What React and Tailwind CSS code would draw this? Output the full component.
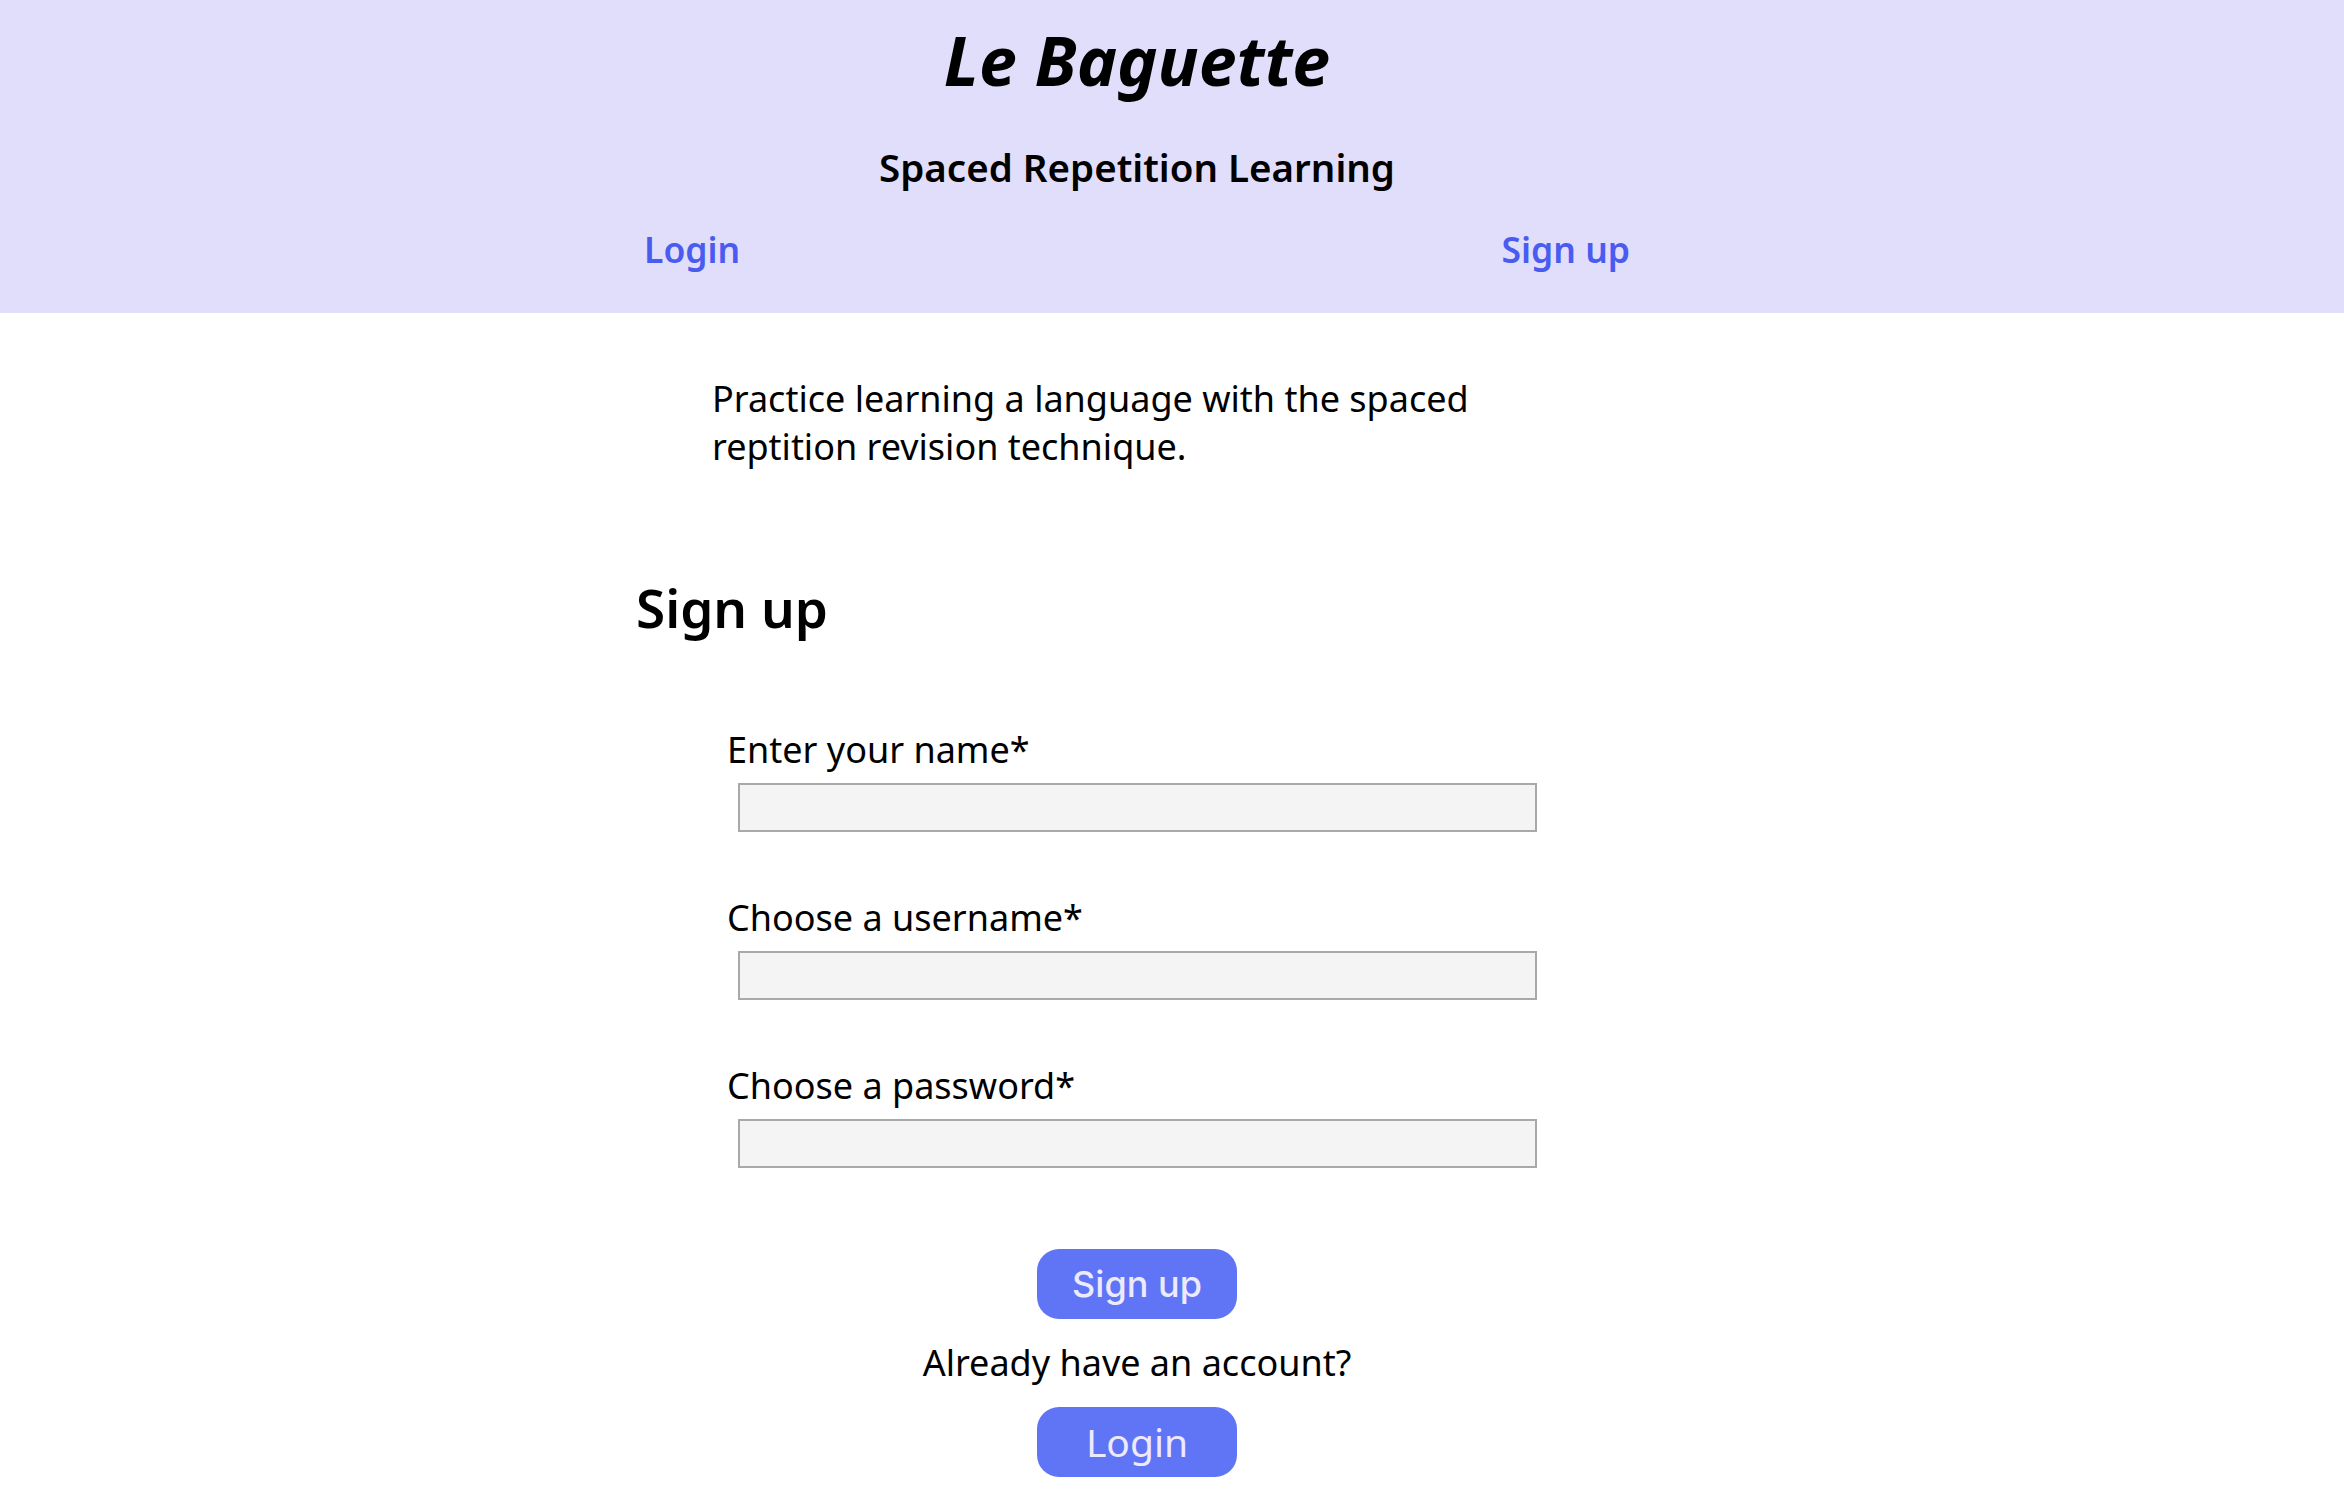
import React, { useState } from "react";

const Field = ({ label, type = "text", value, onChange }) => (
  <div className="flex flex-col">
    <label className="text-[36px] leading-[46px] text-black">{label}</label>
    <input
      type={type}
      value={value}
      onChange={onChange}
      className="mt-[10px] ml-[11px] h-[49px] w-[799px] border-2 border-[#a9a9a9] bg-[#f4f4f4] outline-none"
    />
  </div>
);

const App = () => {
  const [form, setForm] = useState({ name: "", username: "", password: "" });

  const update = (key) => (e) => setForm({ ...form, [key]: e.target.value });

  return (
    <div
      className="min-h-screen bg-white text-black"
      style={{ fontFamily: '"Noto Sans", "Open Sans", sans-serif' }}
    >
      {/* header */}
      <header className="bg-[#e1defb] pt-[12px] pb-[39px]">
        <div className="w-[2274px]">
          <h1 className="text-center text-[68px] leading-[95px] font-bold italic">
            Le Baguette
          </h1>
          <h2 className="mt-[34px] text-center text-[38.5px] leading-[53px] font-semibold">
            Spaced Repetition Learning
          </h2>
          <nav className="mt-[31px] flex justify-between px-[644px] text-[35.5px] leading-[49px] font-semibold text-[#4a5cf0]">
            <a href="#">Login</a>
            <a href="#">Sign up</a>
          </nav>
        </div>
      </header>

      {/* main */}
      <div className="w-[2274px]">
        <main className="mx-auto w-[1002px] pb-[30px]">
          <p className="mt-[62px] ml-[76px] w-[790px] text-[36px] leading-[48px]">
            Practice learning a language with the spaced reptition revision
            technique.
          </p>

          <h2 className="mt-[101px] text-[53px] leading-[72px] font-semibold">
            Sign up
          </h2>

          <form className="mt-[83px] ml-[91px] flex flex-col gap-[63px]">
            <Field label="Enter your name*" value={form.name} onChange={update("name")} />
            <Field label="Choose a username*" value={form.username} onChange={update("username")} />
            <Field
              label="Choose a password*"
              type="password"
              value={form.password}
              onChange={update("password")}
            />
          </form>

          <div className="mt-[81px] flex flex-col items-center">
            <button
              className="h-[70px] w-[200px] rounded-[22px] bg-[#5f75f5] text-[36px] font-medium text-[#eceafc]"
              style={{ fontFamily: "Inter, sans-serif" }}
            >
              Sign up
            </button>
            <p className="mt-[21px] text-[36px] leading-[46px]">Already have an account?</p>
            <button className="mt-[21px] h-[70px] w-[200px] rounded-[22px] bg-[#5f75f5] text-[39px] text-[#eceafc]">
              Login
            </button>
          </div>
        </main>
      </div>
    </div>
  );
};

export default App;
